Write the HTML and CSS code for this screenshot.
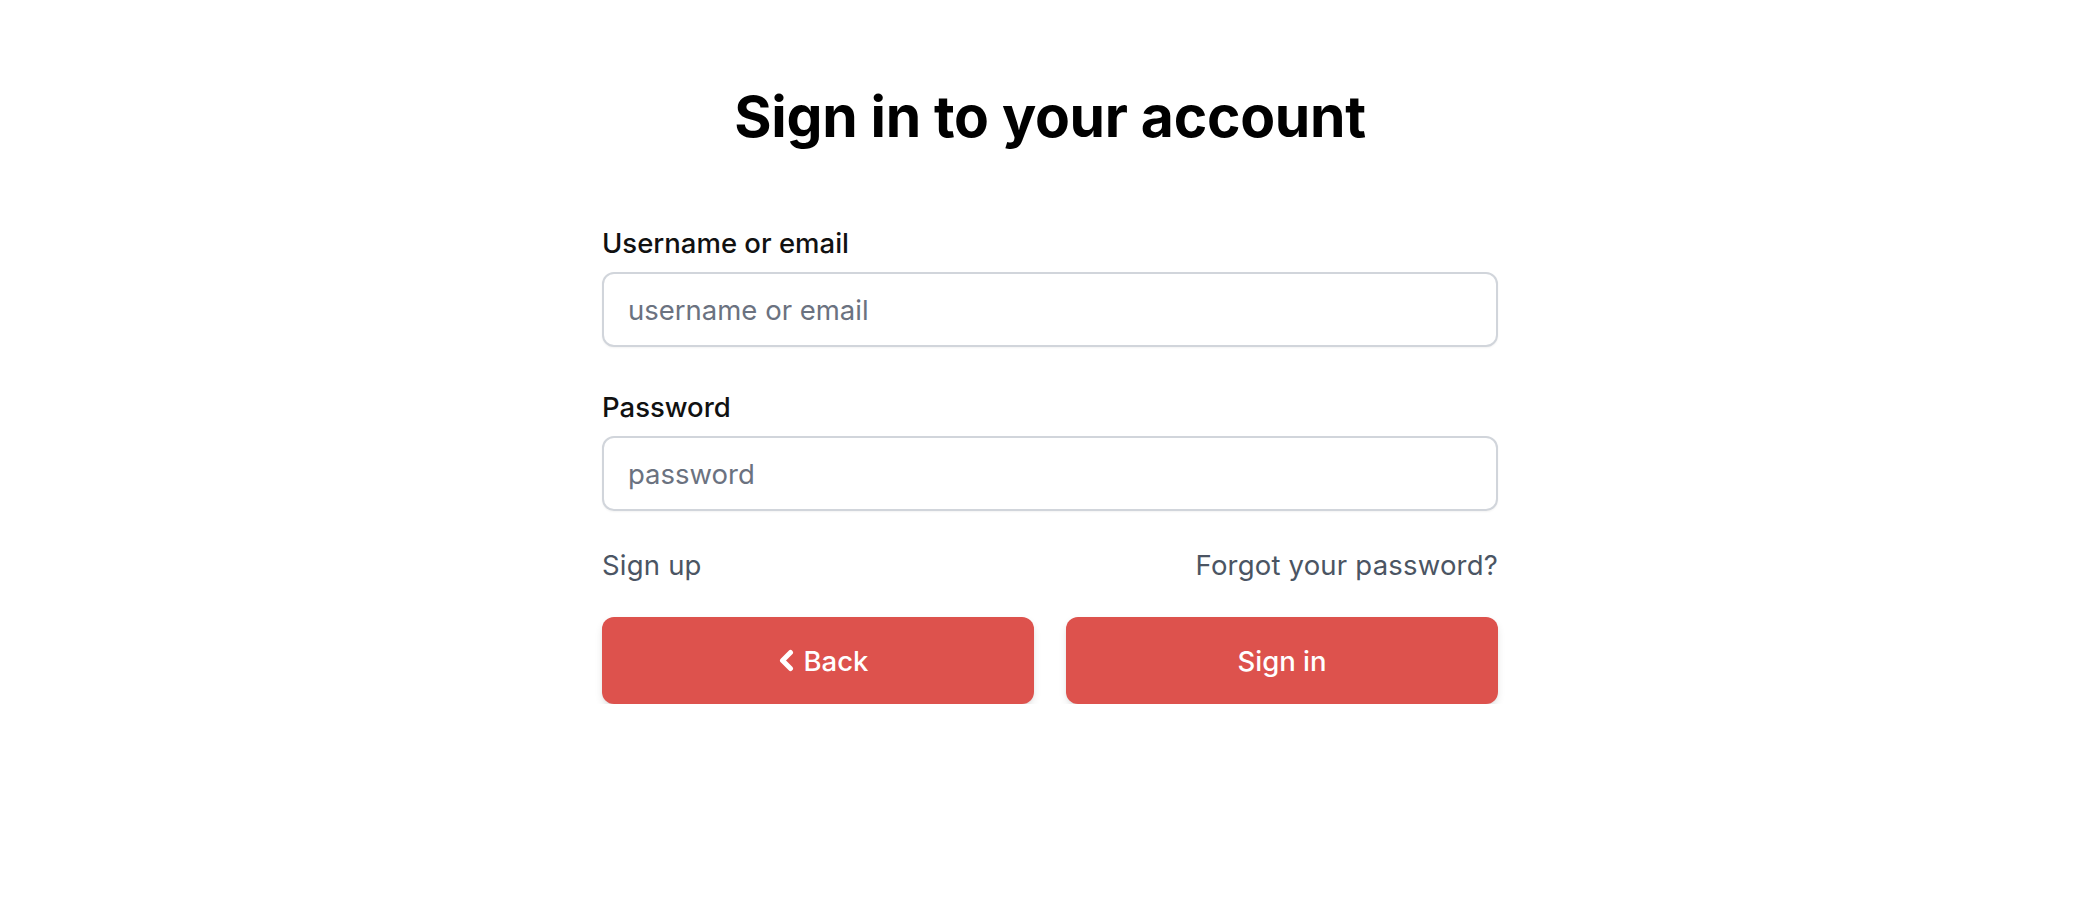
FILE: index.html
```html
<!DOCTYPE html>
<html lang="en">
<head>
<meta charset="utf-8">
<title>Sign in to your account</title>
<link rel="stylesheet" href="styles.css">
</head>
<body>
<main class="page">
  <h1 class="title">Sign in to your account</h1>
  <form class="form">
    <div class="field">
      <label class="label" for="username">Username or email</label>
      <input class="input" id="username" type="text" placeholder="username or email">
    </div>
    <div class="field">
      <label class="label" for="password">Password</label>
      <input class="input" id="password" type="password" placeholder="password">
    </div>
    <div class="links">
      <a class="link" href="#">Sign up</a>
      <a class="link" href="#">Forgot your password?</a>
    </div>
    <div class="actions">
      <button class="btn" type="button">
        <svg class="chev" width="17" height="23" viewBox="0 0 17 23" aria-hidden="true">
          <path d="M12.5 3.5 L4.5 11.5 L12.5 19.5" fill="none" stroke="#fff" stroke-width="5" stroke-linecap="round" stroke-linejoin="round"/>
        </svg>
        <span>Back</span>
      </button>
      <button class="btn" type="submit">Sign in</button>
    </div>
  </form>
</main>
</body>
</html>
```

FILE: styles.css
```css
* { box-sizing: border-box; }
html, body { margin: 0; padding: 0; background: #fff; }
body {
  font-family: Inter, "Noto Sans", "Liberation Sans", sans-serif;
  color: #111;
}
.page {
  width: 896px;
  margin: 0 auto;
  padding-top: 83px;
}
.title {
  margin: 0;
  font-size: 57px;
  line-height: 68px;
  font-weight: 700;
  text-align: center;
  color: #000;
  letter-spacing: -0.3px;
}
.form {
  margin-top: 74px;
  display: flex;
  flex-direction: column;
}
.field {
  display: flex;
  flex-direction: column;
  gap: 11px;
  margin-bottom: 42px;
}
.field + .field { margin-bottom: 36px; }
.label {
  font-size: 27.5px;
  line-height: 36px;
  font-weight: 500;
  color: #111;
}
.input {
  height: 75px;
  border: 2px solid #d1d5db;
  border-radius: 12px;
  padding: 0 24px;
  font-family: inherit;
  font-size: 27.5px;
  color: #111;
  box-shadow: 0 1px 2px rgba(0,0,0,0.05);
  outline: none;
}
.input::placeholder { color: #6b7280; }
.links {
  display: flex;
  justify-content: space-between;
  font-size: 27.5px;
  line-height: 36px;
  letter-spacing: 0.2px;
}
.link {
  color: #4b5563;
  text-decoration: none;
}
.actions {
  margin-top: 34px;
  display: grid;
  grid-template-columns: 1fr 1fr;
  gap: 32px;
}
.btn {
  height: 87px;
  border: none;
  border-radius: 12px;
  background: #dd524d;
  color: #fff;
  font-family: inherit;
  font-size: 27.5px;
  font-weight: 500;
  display: flex;
  align-items: center;
  justify-content: center;
  gap: 9px;
  box-shadow: 0 4px 8px -1px rgba(0,0,0,0.12), 0 2px 4px -2px rgba(0,0,0,0.1);
  cursor: pointer;
}
.chev { display: block; margin-left: 10px; }
```
